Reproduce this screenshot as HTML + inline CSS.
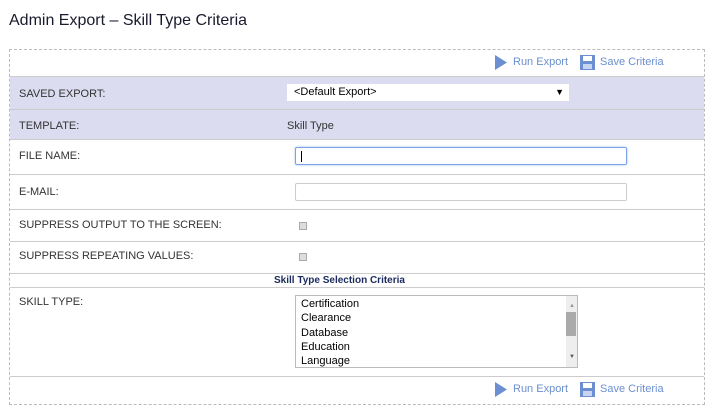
<!DOCTYPE html>
<html><head><style>
body{margin:0;width:713px;height:416px;background:#fff;font-family:"Liberation Sans",sans-serif;position:relative;overflow:hidden;color:#333}
.a{position:absolute}
.lbl{font-size:11px;color:#333;left:19px}
.sep{position:absolute;left:10px;width:694px;height:0;border-top:1px solid #ccc}
.tb{font-size:11px;color:#6b8fd0}
</style></head><body>
<div class="a" style="left:9px;top:12px;font-size:16px;color:#1a1a2e">Admin Export – Skill Type Criteria</div>
<div class="a" style="left:9px;top:49px;width:694px;height:354px;border:1px dashed #bbb"></div>
<div class="a" style="left:10px;top:77px;width:694px;height:62px;background:#dcdcf0"></div>
<div class="sep" style="top:76px"></div>
<div class="sep" style="top:109px"></div>
<div class="sep" style="top:139px"></div>
<div class="sep" style="top:174px"></div>
<div class="sep" style="top:209px"></div>
<div class="sep" style="top:241px"></div>
<div class="sep" style="top:273px"></div>
<div class="sep" style="top:287px"></div>
<div class="sep" style="top:376px"></div>

<!-- toolbar top -->
<svg class="a" style="left:494px;top:55px" width="14" height="15"><path d="M1 0L13 7.5L1 15Z" fill="#6b8fd0"/></svg>
<div class="a tb" style="left:513px;top:56px">Run Export</div>
<svg class="a" style="left:580px;top:55px" width="15" height="15"><rect x="0" y="0" width="15" height="15" fill="#6b8fd0"/><rect x="3" y="1" width="9" height="5" fill="#fff"/><rect x="3" y="9" width="9" height="5" fill="#c8d5f0"/></svg>
<div class="a tb" style="left:600px;top:56px">Save Criteria</div>

<div class="a lbl" style="top:88px">SAVED EXPORT:</div>
<div class="a" style="left:287px;top:84px;width:282px;height:17px;background:#fff;font-size:11px;line-height:17px"><span style="margin-left:7px;color:#000">&lt;Default Export&gt;</span><span style="position:absolute;right:5px;top:0;font-size:9px;color:#000">▼</span></div>
<div class="a lbl" style="top:120px">TEMPLATE:</div>
<div class="a" style="left:287px;top:120px;font-size:11px">Skill Type</div>
<div class="a lbl" style="top:150px">FILE NAME:</div>
<div class="a" style="left:295px;top:147px;width:330px;height:16px;border:1px solid #7fa3e8;border-radius:2px;box-shadow:0 0 2px #9bb8ef"><div style="position:absolute;left:5px;top:3px;width:1px;height:11px;background:#000"></div></div>
<div class="a lbl" style="top:186px">E-MAIL:</div>
<div class="a" style="left:295px;top:183px;width:330px;height:16px;border:1px solid #ccc;border-radius:2px"></div>
<div class="a lbl" style="top:219px">SUPPRESS OUTPUT TO THE SCREEN:</div>
<div class="a" style="left:299px;top:222px;width:6px;height:6px;border:1px solid #aaa;background:#ddd"></div>
<div class="a lbl" style="top:250px">SUPPRESS REPEATING VALUES:</div>
<div class="a" style="left:299px;top:253px;width:6px;height:6px;border:1px solid #aaa;background:#ddd"></div>
<div class="a" style="left:274px;top:275px;font-size:10px;font-weight:bold;color:#1a2a5e">Skill Type Selection Criteria</div>
<div class="a lbl" style="top:296px">SKILL TYPE:</div>
<div class="a" style="left:295px;top:295px;width:281px;height:71px;border:1px solid #bbb;font-size:11px;color:#000;line-height:14.3px">
<div style="padding:1px 0 0 5px">Certification<br>Clearance<br>Database<br>Education<br>Language</div>
<div style="position:absolute;right:0;top:0;width:11px;height:71px;background:#eee"></div>
<div style="position:absolute;right:1px;top:16px;width:10px;height:24px;background:#aaa"></div>
<div style="position:absolute;right:2px;top:3px;font-size:6px;color:#999">▲</div>
<div style="position:absolute;right:2px;bottom:3px;font-size:6px;color:#555">▼</div>
</div>

<!-- toolbar bottom -->
<svg class="a" style="left:494px;top:382px" width="14" height="15"><path d="M1 0L13 7.5L1 15Z" fill="#6b8fd0"/></svg>
<div class="a tb" style="left:513px;top:383px">Run Export</div>
<svg class="a" style="left:580px;top:382px" width="15" height="15"><rect x="0" y="0" width="15" height="15" fill="#6b8fd0"/><rect x="3" y="1" width="9" height="5" fill="#fff"/><rect x="3" y="9" width="9" height="5" fill="#c8d5f0"/></svg>
<div class="a tb" style="left:600px;top:383px">Save Criteria</div>
</body></html>
